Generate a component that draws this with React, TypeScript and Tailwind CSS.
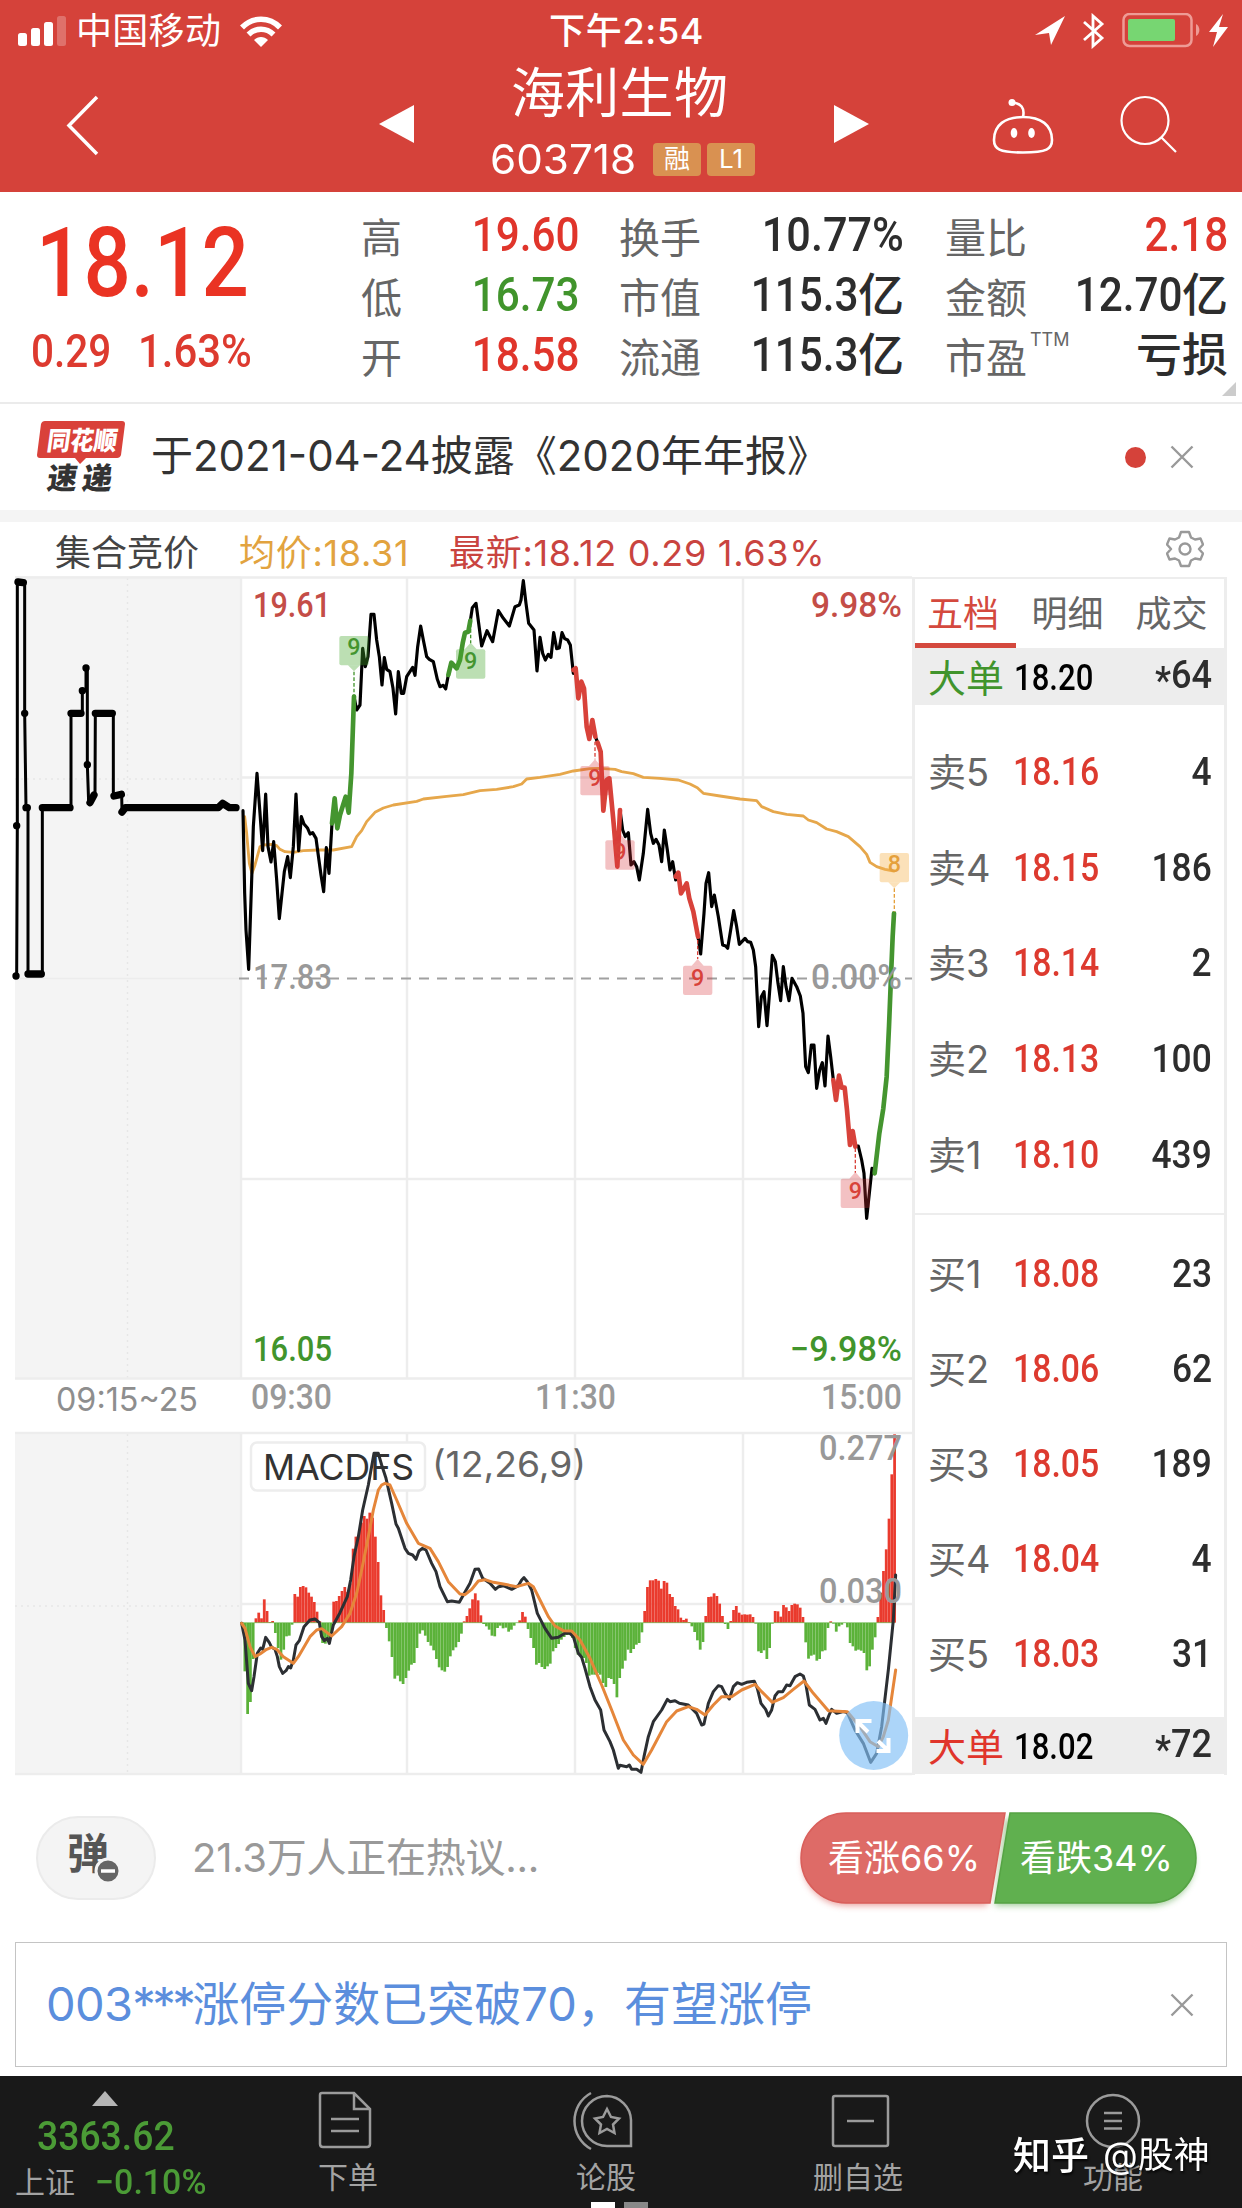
import type { ReactNode } from "react"
import clsx from "clsx"

const CJK = "font-['Inter','Noto_Sans_CJK_SC',sans-serif]"
const NUM = "font-['Roboto','Noto_Sans_CJK_SC',sans-serif] font-medium"

type Quote = {
  label: string
  value: string
  unit?: string
  color?: string
  sup?: string
}

type Level = {
  label: string
  price: string
  volume: string
}

const quoteColumns: Quote[][] = [
  [
    { label: "高", value: "19.60", color: "text-[#e0352b]" },
    { label: "低", value: "16.73", color: "text-[#41942c]" },
    { label: "开", value: "18.58", color: "text-[#e0352b]" },
  ],
  [
    { label: "换手", value: "10.77%" },
    { label: "市值", value: "115.3", unit: "亿" },
    { label: "流通", value: "115.3", unit: "亿" },
  ],
  [
    { label: "量比", value: "2.18", color: "text-[#e0352b]" },
    { label: "金额", value: "12.70", unit: "亿" },
    { label: "市盈", value: "", unit: "亏损", sup: "TTM" },
  ],
]

const quoteWidths = ["ml-[361px] w-[218px]", "ml-[40px] w-[285px]", "ml-[41px] w-[283px]"]

const sells: Level[] = [
  { label: "卖5", price: "18.16", volume: "4" },
  { label: "卖4", price: "18.15", volume: "186" },
  { label: "卖3", price: "18.14", volume: "2" },
  { label: "卖2", price: "18.13", volume: "100" },
  { label: "卖1", price: "18.10", volume: "439" },
]

const buys: Level[] = [
  { label: "买1", price: "18.08", volume: "23" },
  { label: "买2", price: "18.06", volume: "62" },
  { label: "买3", price: "18.05", volume: "189" },
  { label: "买4", price: "18.04", volume: "4" },
  { label: "买5", price: "18.03", volume: "31" },
]

// one value per minute, in thirds of a pixel
const macdBars = [
  2, -145, -273, -237, -108, 13, 30, 13, 70, 35, 2, 5, -30, -75, -110, -80, -40, -38, -5, 86,
  78, 107, 110, 106, 90, 78, 62, 33, 4, -60, -62, -55, -40, 63, 65, 80, 95, 107, 92, 118,
  222, 258, 262, 300, 320, 312, 330, 315, 258, 182, 82, 38, -15, -55, -102, -167, -158, -175, -183, -165,
  -143, -125, -120, -75, -32, -22, -38, -57, -68, -82, -108, -133, -142, -146, -132, -100, -82, -73, -57, -32,
  4, 20, 43, 70, 88, 67, 22, -3, -10, -20, -38, -40, -15, -8, -16, -14, -26, -20, -8, 0,
  7, 32, 18, -18, -45, -75, -125, -120, -132, -138, -130, -122, -85, -75, -63, -50, -42, -36, -35, -45,
  -75, -95, -100, -105, -120, -158, -155, -155, -150, -155, -180, -192, -165, -168, -183, -223, -165, -137, -113, -80,
  -90, -78, -65, -60, -28, 35, 107, 127, 127, 131, 126, 102, 125, 120, 86, 77, 50, 40, 15, 8,
  12, 2, -10, -27, -52, -80, -57, 20, 77, 78, 88, 80, 57, 20, -3, -18, 5, 38, 50, 30,
  24, 25, 24, 25, 17, -2, -85, -90, -82, -108, -75, -2, 35, 34, 18, 53, 46, 35, 53, 57,
  55, 45, 17, -58, -107, -98, -95, -113, -108, -85, -82, -15, 4, -2, -26, -10, -5, 0, -13, -60,
  -70, -83, -80, -83, -90, -142, -130, -80, -43, 17, 90, 155, 220, 312, 445, 565,
]

function Line({ points, color = "#000", width = 9.5 }: { points: string; color?: string; width?: number }) {
  return (
    <polyline
      points={points}
      fill="none"
      stroke={color}
      strokeWidth={width}
      strokeLinejoin="round"
      strokeLinecap="round"
    />
  )
}

function Marker({
  x,
  y,
  n = "9",
  down = false,
  fill,
  color,
  dash,
}: {
  x: number
  y: number
  n?: string
  down?: boolean
  fill: string
  color: string
  dash?: [number, number]
}) {
  return (
    <g>
      {dash && (
        <line x1={x} x2={x} y1={dash[0]} y2={dash[1]} stroke={color} strokeWidth="4" strokeDasharray="11 6" />
      )}
      <g fill={fill}>
        <rect x={x - 44} y={y} width="88" height="88" rx="6" />
        {down ? (
          <path d={`M${x - 18} ${y + 88}L${x} ${y + 106}L${x + 18} ${y + 88}Z`} />
        ) : (
          <path d={`M${x - 18} ${y}L${x} ${y - 20}L${x + 18} ${y}Z`} />
        )}
      </g>
      <text x={x} y={down ? y + 57 : y + 60} fontSize="70" textAnchor="middle" fill={color} className={NUM}>
        {n}
      </text>
    </g>
  )
}

function AxisText({
  x,
  y,
  w,
  fill,
  size = 35,
  children,
}: {
  x: number
  y: number
  w: number
  fill: string
  size?: number
  children: string
}) {
  return (
    <text
      x={x}
      y={y}
      textLength={w}
      lengthAdjust="spacingAndGlyphs"
      fontSize={size}
      fill={fill}
      className={NUM}
    >
      {children}
    </text>
  )
}

function Chart() {
  const red = "#d8423a"
  const green = "#44952f"
  const avg = "#e6a74b"
  const redFill = "rgba(214,50,55,0.3)"
  const greenFill = "rgba(70,165,45,0.36)"

  return (
    <svg width="912" height="1208" viewBox="0 576 912 1208" className="block shrink-0">
      <rect x="15" y="576" width="226" height="803" fill="#f4f4f4" />
      <rect x="15" y="1433" width="226" height="341" fill="#f4f4f4" />
      <g stroke="#e6e6e6" strokeWidth="1.5" strokeDasharray="2 4">
        <path d="M127.500 578V1379M15 779H240M127.500 1434V1774M15 1606H240" />
      </g>
      <g stroke="#ededed" strokeWidth="2.500" fill="none">
        <path d="M15 577.500H914M241 577V1379M407 577V1379M575 577V1379M743 577V1379" />
        <path d="M241 777.500H914M241 1179H914M15 1378.500H914" />
        <path d="M15 1433H914M241 1433V1774M407 1433V1774M575 1433V1774M743 1433V1774M241 1604H914M15 1774H914" />
      </g>
      <path d="M15 978.500H241" stroke="#ececec" strokeWidth="1.500" />
      <path d="M239 978.500H914" stroke="#a0a0a0" strokeWidth="1.800" strokeDasharray="10 8" />

      {/* call auction */}
      <g transform="translate(0 560) scale(0.33333)">
        <Line
          width={9}
          points="50,1248 52,800 52,66 74,68 74,460 78,743 84,743 84,1242 127,1242 127,743 213,743 213,460 247,460 247,392 258,392 258,324 262,324 262,614 266,728 285,705 286,460 340,460 340,708 365,703 366,756 376,743"
        />
        <path
          d="M54 66L70 68M84 1242H124M127 743H210M213 460H243M286 460H337M270 728L282 705M342 708L364 703M366 756L376 743H655L668 730L688 743H708M74 460h.1M78 743h4M258 324h.1M247 392h.1M262 614h.1M50 797h.1M48 1248h.1"
          stroke="#000"
          strokeWidth="22"
          strokeLinecap="round"
          strokeLinejoin="round"
          fill="none"
        />
      </g>

      {/* morning session */}
      <g transform="translate(240 560) scale(0.33333)">
        <Line
          color={avg}
          width={8.5}
          points="14,770 20,820 28,910 36,940 45,915 60,860 70,855 95,853 110,857 120,868 135,875 160,877 190,872 235,870 280,870 335,860 350,830 365,812 380,785 405,757 430,744 460,735 530,724 550,717 620,709 670,704 720,692 770,688 820,680 845,672 860,657 900,652 960,643 1000,633 1050,626 1080,625 1125,628 1145,635 1180,641 1210,652 1260,655 1315,660 1350,672 1372,683 1390,700 1440,708 1500,717 1550,722 1565,740 1600,755 1640,763 1690,768 1705,780 1730,788 1760,807 1790,815 1825,830 1860,860 1880,883 1890,907 1910,920 1935,928 1962,933"
        />
        <Line points="9,752 14,1000 18,1110 26,1228 36,930 40,800 51,640 60,760 68,872 77,702 84,860 93,906 101,845 110,960 118,1076 126,1000 133,935 143,890 151,953 160,860 168,702 176,872 184,770 192,792 203,805 210,822 218,818 228,835 234,880 243,945 251,995 259,863 267,940 276,790" />
        <Line points="342,410 350,450 360,435 368,265 376,320 384,290 393,163 402,163 410,240 418,290 426,375 433,293 440,328 450,335 459,385 467,462 475,335 484,400 491,400 500,350 518,322 525,346 533,260 542,198 550,240 560,290 568,298 580,305 592,358 600,380 610,376 617,387 625,345" />
        <Line points="691,182 697,143 708,130 716,190 725,258 741,212 758,245 775,152 790,175 808,198 825,140 838,135 843,120 850,62 858,130 866,190 882,210 891,333 900,232 908,280 916,300 925,283 933,292 941,218 950,266 958,264 966,218 974,236 983,240 991,255 1000,340" />
        <Line color={green} width={14} points="276,790 284,715 292,805 300,765 317,710 326,758 334,640 342,410" />
        <Line color={green} width={14} points="625,345 634,308 650,325 660,300 668,250 675,218 685,215 691,182" />
        <Marker x={342} y={228} down fill={greenFill} color={green} dash={[335, 405]} />
        <Marker x={692} y={268} fill={greenFill} color={green} dash={[190, 250]} />
      </g>

      {/* afternoon session */}
      <g transform="translate(560 560) scale(0.33333)">
        <Line points="106,530 113,548" />
        <Line points="180,750 188,810 196,830 205,818 213,915 222,905 230,920 238,960 250,880 263,748 272,820 280,850 288,838 297,855 305,905 313,810 322,870 330,930 338,905 347,960" />
        <Line points="414,1130 422,1182 432,1060 438,970 446,938 455,1040 463,1005 475,1070 488,1155 497,1158 503,1165 512,1110 521,1052 530,1100 538,1153 555,1135 563,1145 572,1147 580,1170 587,1220 596,1400 604,1310 612,1295 621,1397 630,1280 637,1186 646,1205 654,1270 662,1322 670,1220 678,1280 687,1322 696,1255 710,1280 721,1308 729,1360 737,1520 745,1538 754,1455 762,1455 770,1585 779,1530 787,1508 795,1578 804,1428 812,1490 820,1560" />
        <Line points="886,1758 895,1758 905,1800 912,1840 920,1975 928,1900 936,1825 944,1840" />
        <Line color={red} width={14} points="40,330 47,325 55,415 64,365 72,385 80,500 88,537 97,480 106,530" />
        <Line color={red} width={14} points="113,548 122,575 130,752 140,660 148,655 160,780 172,920 180,750" />
        <Line color={red} width={14} points="347,950 355,938 363,1000 380,970 388,1015 400,1055 414,1130" />
        <Line color={red} width={14} points="820,1560 828,1620 837,1547 845,1583 854,1583 861,1650 870,1755 878,1713 886,1760" />
        <Marker x={105} y={618} fill={redFill} color={red} dash={[545, 598]} />
        <Marker x={180} y={841} fill={redFill} color={red} />
        <Marker x={413} y={1217} fill={redFill} color={red} dash={[1140, 1197]} />
        <Marker x={886} y={1856} fill={redFill} color={red} dash={[1765, 1838]} />
        <Line color={green} width={14} points="944,1840 958,1720 970,1645 980,1550 987,1400 993,1250 998,1130 1002,1060" />
        <Marker x={1003} y={879} n="8" down fill="rgba(245,180,80,0.4)" color="#e5a03c" dash={[985, 1055]} />
      </g>

      <AxisText x={253} y={617} w={78} fill="#c44d47">19.61</AxisText>
      <AxisText x={811} y={617} w={91} fill="#c44d47">9.98%</AxisText>
      <AxisText x={253} y={989} w={79} fill="#999">17.83</AxisText>
      <AxisText x={811} y={989} w={91} fill="#999">0.00%</AxisText>
      <AxisText x={253} y={1361} w={79} fill="#41942c">16.05</AxisText>
      <AxisText x={790} y={1361} w={112} fill="#41942c">−9.98%</AxisText>
      <AxisText x={251} y={1409} w={81} fill="#999">09:30</AxisText>
      <AxisText x={535} y={1409} w={81} fill="#999">11:30</AxisText>
      <AxisText x={821} y={1409} w={81} fill="#999">15:00</AxisText>
      <text x="56" y="1411" textLength="142" lengthAdjust="spacingAndGlyphs" fontSize="33" fill="#8e8e8e" className={CJK}>
        09:15~25
      </text>

      {/* macd */}
      <rect x="251" y="1442.500" width="174" height="48" rx="6" fill="#fff" stroke="#ededed" strokeWidth="2.500" />
      <text x="263" y="1480" textLength="151" lengthAdjust="spacingAndGlyphs" fontSize="36" fill="#333" className={CJK}>
        MACDFS
      </text>
      <text x="432" y="1477" textLength="154" lengthAdjust="spacingAndGlyphs" fontSize="35" fill="#666" className={CJK}>
        (12,26,9)
      </text>
      <g transform="translate(230 1420) scale(0.33333)">
        {macdBars.map((v, i) => (
          <g key={i} fill={v >= 0 ? "#ea3a2d" : "#5bb239"}>
            <rect x={32 + i * 8.33} y={v >= 0 ? 608 - v : 609} width="8.33" height={Math.abs(v)} />
            <rect x={32 + i * 8.33} y={v >= 0 ? 608 - v : 609} width="1" height={Math.abs(v)} fill="rgba(255,255,255,0.15)" />
          </g>
        ))}
        <line x1="32" x2="1995" y1="608" y2="608" stroke="#5bb239" strokeWidth="2" />
        <Line
          width={9}
          color="#2c2f33"
          points="35,610 45,660 55,790 65,812 72,770 82,700 92,684 98,688 107,652 118,668 125,682 135,688 142,710 148,740 158,760 168,752 175,740 182,744 190,720 198,675 208,662 222,620 240,600 255,597 268,608 275,650 283,662 292,655 298,670 310,615 330,578 352,530 362,480 372,410 385,350 398,270 415,195 432,100 445,100 455,135 468,175 485,250 498,312 505,325 525,385 535,400 548,405 558,418 567,393 577,385 588,390 605,430 618,455 630,500 652,545 665,543 688,547 703,520 720,490 735,448 746,447 758,475 780,490 796,508 806,500 820,497 845,508 865,497 875,480 882,473 892,485 905,510 922,580 945,625 965,655 985,652 1005,640 1020,640 1030,650 1045,700 1055,712 1065,745 1080,800 1095,840 1112,870 1122,930 1140,965 1150,990 1165,1045 1170,1036 1190,1040 1198,1035 1205,1048 1220,1048 1233,1057 1242,1010 1255,950 1270,905 1295,870 1312,838 1320,845 1335,842 1348,850 1375,855 1400,880 1415,915 1422,912 1435,850 1450,815 1465,797 1475,800 1485,820 1498,837 1510,800 1522,788 1535,793 1550,787 1573,784 1582,805 1593,850 1607,868 1615,888 1625,870 1635,828 1645,815 1658,815 1670,795 1680,797 1695,770 1710,762 1720,768 1728,795 1738,855 1755,868 1770,900 1780,895 1788,910 1796,888 1805,868 1820,880 1840,875 1852,878 1875,930 1900,970 1922,1027 1940,1000 1955,920 1975,750 1990,600 1997,465"
        />
        <Line
          width={9}
          color="#e5863a"
          points="35,610 45,625 60,680 75,710 90,702 110,688 125,682 140,688 160,710 190,730 205,710 240,650 260,630 275,626 305,648 335,620 360,580 380,520 395,450 415,350 430,270 445,210 455,195 465,190 480,195 500,240 530,310 565,370 600,385 625,425 655,485 690,522 705,524 725,508 745,483 765,479 790,487 820,492 860,500 895,490 910,500 930,540 955,590 975,618 1000,632 1025,633 1050,660 1080,715 1115,795 1145,870 1180,960 1210,1005 1240,1033 1265,990 1310,905 1340,873 1375,860 1400,868 1425,885 1450,855 1475,830 1505,830 1535,810 1575,793 1595,815 1627,847 1660,833 1690,808 1722,783 1750,820 1795,872 1852,875 1890,920 1920,965 1945,980 1960,950 1975,900 1997,750"
        />
      </g>
      <AxisText x={819} y={1460} w={83} fill="#999">0.277</AxisText>
      <AxisText x={819} y={1603} w={83} fill="#999">0.030</AxisText>
      <circle cx="873.700" cy="1735.500" r="34.500" fill="rgba(129,192,246,0.66)" />
      <g stroke="#fff" strokeWidth="4" fill="none">
        <path d="M857.500 1733V1721H871.500M858 1722L868 1732M876.500 1751H888.500V1738M888 1750.500L878 1741" />
      </g>
    </svg>
  )
}

function StatusBar() {
  return (
    <div className="flex h-[62px] items-center pl-[18px] text-white">
      <svg width="48" height="30" viewBox="0 0 48 30" fill="#fff">
        <rect x="0" y="17" width="9" height="13" rx="2.500" />
        <rect x="13" y="12" width="9" height="18" rx="2.500" />
        <rect x="26" y="6" width="9" height="24" rx="2.500" />
        <rect x="39" y="0" width="9" height="30" rx="2.500" opacity="0.25" />
      </svg>
      <span className="ml-[10px] w-[144px] whitespace-nowrap text-[36px] leading-none tracking-[0.3px]">中国移动</span>
      <svg width="42" height="31" viewBox="0 0 42 31" className="ml-[20px]">
        <path d="M2 11.500C12.500 0.500 29.500 0.500 40 11.500" stroke="#fff" strokeWidth="5.500" fill="none" />
        <path d="M8.500 18.500C15.500 11.500 26.500 11.500 33.500 18.500" stroke="#fff" strokeWidth="5.500" fill="none" />
        <path d="M14 24C18 20 24 20 28 24L21 31Z" fill="#fff" />
      </svg>
      <span className="ml-[267px] w-[160px] whitespace-nowrap text-[36px] font-medium leading-none tracking-[0.7px]">下午2:54</span>
      <svg width="204" height="36" viewBox="1033 13 204 36" className="ml-[324px]">
        <path d="M1035 35L1065 16L1051 45L1049 33Z" fill="#fff" />
        <path d="M1084 22L1102 38L1093 46V16L1102 24L1084 40" stroke="#fff" strokeWidth="2.800" fill="none" />
        <rect x="1123.500" y="14" width="68" height="32" rx="6" stroke="#ee9b95" strokeWidth="2.500" fill="none" />
        <rect x="1128" y="19" width="47" height="22" rx="2" fill="#77d672" />
        <path d="M1196 24V36C1200.500 34 1200.500 26 1196 24Z" fill="#ee9b95" />
        <path d="M1223 14L1209 32H1217L1213 47L1228 27H1219Z" fill="#fff" />
      </svg>
    </div>
  )
}

function Badge({ children }: { children: ReactNode }) {
  return (
    <span className="flex h-[33px] w-[48px] items-center justify-center rounded-[4px] bg-[#d99151] text-[26px] leading-none">
      {children}
    </span>
  )
}

function Header() {
  return (
    <header className="h-[192px] bg-[#d5423a] text-white">
      <StatusBar />
      <div className="flex h-[130px]">
        <svg width="34" height="62" viewBox="0 0 34 62" className="ml-[65px] mt-[32px]">
          <path d="M32 3L4 31.500L32 60" stroke="#fff" strokeWidth="3.500" fill="none" />
        </svg>
        <svg width="35" height="38" viewBox="0 0 35 38" className="ml-[280px] mt-[43px]" fill="#fff">
          <path d="M35 0V38L0 19Z" />
        </svg>
        <div className="ml-[76px] w-[275px]">
          <h1 className="ml-[21px] mt-[5px] text-[54px] leading-[54px] tracking-[0.3px]">海利生物</h1>
          <div className="mt-[18px] flex items-center">
            <span className="w-[147px] origin-left scale-x-[1.03] whitespace-nowrap text-[41px] leading-[40px]">603718</span>
            <span className="ml-[16px] flex gap-[6px]">
              <Badge>融</Badge>
              <Badge>L1</Badge>
            </span>
          </div>
        </div>
        <svg width="35" height="38" viewBox="0 0 35 38" className="ml-[69px] mt-[43px]" fill="#fff">
          <path d="M0 0L35 19L0 38Z" />
        </svg>
        <svg width="62" height="58" viewBox="0 0 62 58" className="ml-[123px] mt-[35px]" stroke="#fff" strokeWidth="2.600" fill="none">
          <path d="M31 20C13 20 2 28 2 43C2 52 7 55.500 31 55.500S60 52 60 43C60 28 49 20 31 20Z" />
          <path d="M31 20C33 11 29 6 20 5.500" />
          <circle cx="20" cy="5.500" r="3.500" fill="#fff" stroke="none" />
          <ellipse cx="22" cy="36" rx="3.300" ry="5" fill="#fff" stroke="none" />
          <ellipse cx="39.500" cy="36" rx="3.300" ry="5" fill="#fff" stroke="none" />
        </svg>
        <svg width="60" height="60" viewBox="0 0 60 60" className="ml-[66px] mt-[33px]" stroke="#fff" strokeWidth="2.200" fill="none">
          <circle cx="25" cy="25.500" r="23.500" />
          <path d="M41 42L56 57" />
        </svg>
      </div>
    </header>
  )
}

function QuotePanel() {
  return (
    <section className="relative flex h-[212px] border-b-2 border-[#ebebeb]">
      <div className={clsx("absolute left-0 top-0 text-[#dd3a2f]", NUM)}>
        <div className="ml-[36px] mt-[23px] origin-left scale-x-[0.86] text-[97px] leading-[97px] text-[#ea3323]">18.12</div>
        <div className="mt-[16px] flex text-[46px] leading-[46px]">
          <span className="ml-[31px] w-[107px] origin-left scale-x-[0.88]">0.29</span>
          <span className="origin-left scale-x-[0.91]">1.63%</span>
        </div>
      </div>
      {quoteColumns.map((column, i) => (
        <div key={i} className={clsx("flex shrink-0 flex-col pt-[16px]", quoteWidths[i])}>
          {column.map((item) => (
            <div key={item.label} className="flex h-[60px] items-center justify-between">
              <span className="flex text-[41px] leading-none text-[#666]">
                {item.label}
                {item.sup && <sup className="top-0 -mt-[7px] ml-[3px] text-[18px] leading-none">{item.sup}</sup>}
              </span>
              <span
                className={clsx(
                  "-mt-[6px] flex items-center whitespace-nowrap text-[48px] leading-none",
                  NUM,
                  item.color ?? "text-[#2d2d2d]",
                )}
              >
                <span className={clsx("origin-right", item.value.endsWith("%") ? "scale-x-[0.9]" : "scale-x-[0.88]")}>
                  {item.value}
                </span>
                {item.unit && <span className="text-[46px]">{item.unit}</span>}
              </span>
            </div>
          ))}
        </div>
      ))}
      <svg width="14" height="14" className="absolute bottom-[6px] right-[6px]">
        <path d="M14 0V14H0Z" fill="#ccc" />
      </svg>
    </section>
  )
}

function CloseIcon() {
  return (
    <svg width="24" height="24" viewBox="0 0 24 24" stroke="#999" strokeWidth="2.400">
      <path d="M1.500 1.500L22.500 22.500M22.500 1.500L1.500 22.500" />
    </svg>
  )
}

function NoticeBar() {
  return (
    <section className="flex h-[118px] items-center border-b-[12px] border-[#f4f4f4]">
      <svg width="90" height="76" viewBox="36 418 90 76" className="ml-[36px] overflow-visible">
        <path d="M45 420H122Q125 420 125 423L121 454Q120 457 117 457H86L80 463L75 457H40Q37 457 37 454L41 423Q42 420 45 420Z" fill="#d9413a" />
        <g className="font-['Noto_Sans_CJK_SC',sans-serif] font-black" fontSize="26">
          <text transform="translate(46 448.500) skewX(-8)" textLength="70" lengthAdjust="spacingAndGlyphs" fill="#fff">
            同花顺
          </text>
          <text transform="translate(46 488) skewX(-8)" fontSize="30" textLength="65" lengthAdjust="spacing" fill="#333">
            速递
          </text>
        </g>
      </svg>
      <p className="-mt-[2px] ml-[25px] w-[950px] text-[42px] leading-none text-[#333]">于2021-04-24披露《2020年年报》</p>
      <span className="ml-[24px] h-[21px] w-[21px] rounded-full bg-[#d5423a]" />
      <span className="ml-[24px]">
        <CloseIcon />
      </span>
    </section>
  )
}

function Legend() {
  return (
    <div className="flex h-[54px] items-center pt-[7px] text-[36px] leading-none tracking-[0.7px]">
      <span className="ml-[55px] w-[184px] tracking-normal text-[#444]">集合竞价</span>
      <span className="w-[210px] text-[#e2a33f]">均价:18.31</span>
      <span className="w-[717px] whitespace-pre text-[#c9443f]">最新:18.12 0.29 1.63%</span>
      <svg width="38" height="38" viewBox="-19 -19 38 38" stroke="#999" strokeWidth="2.400" fill="none" strokeLinejoin="round" className="-mt-[8px]">
        <path d="M-4 -17H4L6 -11.500L10 -9.500L15.500 -10.500L18 -4.500L14 0L18 4.500L15.500 10.500L10 9.500L6 11.500L4 17H-4L-6 11.500L-10 9.500L-15.500 10.500L-18 4.500L-14 0L-18 -4.500L-15.500 -10.500L-10 -9.500L-6 -11.500Z" />
        <circle r="5.500" />
      </svg>
    </div>
  )
}

function BigOrder({ color, price, volume }: { color: string; price: string; volume: string }) {
  return (
    <div className="flex h-[57px] items-center bg-[#ededed] pl-[13px] pr-[12px] pt-[2px]">
      <span className={clsx("w-[86px] text-[38px] leading-none", color)}>大单</span>
      <span className={clsx("origin-left scale-x-[0.84] text-[37px] leading-none text-black", NUM)}>{price}</span>
      <span className={clsx("ml-auto flex origin-right scale-x-[0.95] text-[38px] leading-none text-[#2d2d2d]", NUM)}>
        <span className="mt-[6px]">*</span>
        {volume}
      </span>
    </div>
  )
}

function LevelRow({ label, price, volume }: Level) {
  return (
    <div className="flex items-center pl-[13px] pr-[12px] text-[38px] leading-none">
      <span className="w-[85px] text-[#666]">{label}</span>
      <span className={clsx("origin-left scale-x-[0.89] text-[#dd3a2f]", NUM)}>{price}</span>
      <span className={clsx("ml-auto origin-right scale-x-[0.93] text-[#2d2d2d]", NUM)}>{volume}</span>
    </div>
  )
}

function OrderBook() {
  return (
    <aside className="mt-px h-[1198px] w-[315px] border-x-[3px] border-t-2 border-[#ededed]">
      <div className="flex h-[69px] text-[36px] leading-none text-[#666]">
        <span className="flex w-[102px] items-center justify-center border-b-[5px] border-[#d4493e] pr-[5px] pt-[6px] text-[#d4493e]">五档</span>
        <span className="flex w-[104px] items-center justify-center">明细</span>
        <span className="flex w-[105px] shrink-0 items-center justify-center">成交</span>
      </div>
      <BigOrder color="text-[#41942c]" price="18.20" volume="64" />
      <div className="h-[510px] border-b-2 border-[#ededed] pt-[19px]">
        <div className="grid h-[479px] grid-rows-5">
          {sells.map((level) => (
            <LevelRow key={level.label} {...level} />
          ))}
        </div>
      </div>
      <div className="h-[502px] pt-[11px]">
        <div className="grid h-[475px] grid-rows-5">
          {buys.map((level) => (
            <LevelRow key={level.label} {...level} />
          ))}
        </div>
      </div>
      <BigOrder color="text-[#e0352b]" price="18.02" volume="72" />
    </aside>
  )
}

function Discussion() {
  return (
    <section className="flex h-[158px] items-center pb-[10px] pl-[36px]">
      <div className="flex h-[84px] w-[120px] items-center justify-center rounded-[42px] border-2 border-[#ebebeb] bg-[#f4f4f4]">
        <svg width="56" height="56" viewBox="0 0 56 56" className="overflow-visible">
          <text x="-1" y="39" fontSize="42" fill="#555" className="font-['Noto_Sans_CJK_SC',sans-serif] font-bold">
            弹
          </text>
          <circle cx="40" cy="41" r="12" fill="#666" stroke="#f4f4f4" strokeWidth="3" />
          <path d="M33 41H47" stroke="#fff" strokeWidth="3.500" />
        </svg>
      </div>
      <p className="ml-[36px] w-[609px] text-[40px] leading-none tracking-[-0.25px] text-[#999]">21.3万人正在热议...</p>
      <div className="relative h-[100px] w-[395px] pt-[5px]">
        <svg width="405" height="104" viewBox="-5 -2 405 104" className="absolute -left-[5px] top-[3px]">
          <defs>
            <filter id="soft" x="-10%" y="-10%" width="120%" height="130%">
              <feGaussianBlur stdDeviation="3" />
            </filter>
          </defs>
          <path d="M45 6H200L186 93H45A42 42 0 0 1 45 6Z" fill="#d9534f" opacity="0.5" filter="url(#soft)" />
          <path d="M204 6H350A42 42 0 0 1 350 93H194Z" fill="#4f9f40" opacity="0.5" filter="url(#soft)" />
          <path d="M45 0H204L189 90H45A45 45 0 0 1 45 0Z" fill="#de6b67" stroke="#d95f5b" strokeWidth="1.500" />
          <path d="M209 0H350A45 45 0 0 1 350 90H194Z" fill="#60b04f" stroke="#55a344" strokeWidth="1.500" />
        </svg>
        <div className="relative flex h-[90px] items-center text-[36px] leading-none text-white">
          <span className="ml-[27px] w-[192px]">看涨66%</span>
          <span>看跌34%</span>
        </div>
      </div>
    </section>
  )
}

function Alert() {
  return (
    <section className="mx-[15px] flex h-[125px] items-center border border-[#c4c4c4] pl-[30px]">
      <p className="-mt-[2px] w-[1124px] text-[47px] leading-none text-[#5b8edd]">
        <span className="tracking-[-0.700px]">003</span>
        <span className="tracking-[-3.500px]">***</span>涨停分数已突破70，有望涨停
      </p>
      <CloseIcon />
    </section>
  )
}

function TabItem({ label, className, children }: { label: string; className: string; children: ReactNode }) {
  return (
    <div className={clsx("flex flex-col items-center", className)}>
      <svg width="62" height="60" viewBox="0 0 62 60" stroke="#9b9b9b" strokeWidth="2.500" fill="none" className="mt-[15px] overflow-visible">
        {children}
      </svg>
      <span className="mt-[11px] whitespace-nowrap text-[30px] leading-[30px]">{label}</span>
    </div>
  )
}

function TabBar() {
  return (
    <nav className="relative mt-[9px] flex h-[132px] bg-[#191919] text-[#a3a3a3]">
      <div className="w-[210px]">
        <svg width="26" height="15" viewBox="0 0 26 15" className="ml-[92px] mt-[15px]">
          <path d="M13 0L26 15H0Z" fill="#b5b5b5" />
        </svg>
        <div className={clsx("ml-[37px] mt-[10px] origin-left scale-x-[0.91] text-[41px] leading-[41px] text-[#4b9b36]", NUM)}>3363.62</div>
        <div className="mt-[8px] flex text-[30px] leading-[35px]">
          <span className="ml-[15px] w-[82px]">上证</span>
          <span className={clsx("origin-left scale-x-[0.97] text-[35px] text-[#4b9b36]", NUM)}>−0.10%</span>
        </div>
      </div>
      <TabItem label="下单" className="ml-[88px] w-[100px]">
        <path
          transform="translate(-3 0)"
          d="M8 2H40L56 18V53Q56 56 53 56H9Q6 56 6 53V4Q6 2 8 2ZM40 2V18H56M17 28H45M17 40H45"
        />
      </TabItem>
      <TabItem label="论股" className="ml-[158px] w-[100px]">
        <g transform="translate(-4 0)">
          <path d="M20 2C-2 14 -2 46 20 58M36 5A25 25 0 0 0 36 55H60V29A25 25 0 0 0 36 5Z" />
          <path d="M36 18L40 26L48 27.500L42 33.500L43.500 42L36 38L28.500 42L30 33.500L24 27.500L32 26Z" />
        </g>
      </TabItem>
      <TabItem label="删自选" className="ml-[152px] w-[100px]">
        <rect x="6" y="5" width="55" height="50" rx="2" />
        <path d="M20 30H47" />
      </TabItem>
      <TabItem label="功能" className="ml-[155px] w-[100px]">
        <circle cx="31" cy="30" r="26" />
        <path d="M22 22H40M22 30H40M22 37.500H40" />
      </TabItem>
      <div className="absolute left-[1013px] top-[60px] flex gap-[14px] whitespace-nowrap text-[38px] leading-none text-white drop-shadow-[1px_2px_1px_rgba(0,0,0,0.8)]">
        <span className="font-medium">知乎</span>
        <span className="mt-px text-[36px]">@股神</span>
      </div>
      <div className="absolute bottom-0 left-[591px] flex gap-[9px]">
        <span className="h-[6px] w-[24px] bg-white" />
        <span className="h-[6px] w-[24px] bg-[#888]" />
      </div>
    </nav>
  )
}

export default function App() {
  return (
    <main className={clsx("h-[2208px] w-[1242px] overflow-hidden bg-white", CJK)}>
      <Header />
      <QuotePanel />
      <NoticeBar />
      <Legend />
      <div className="flex h-[1208px]">
        <Chart />
        <OrderBook />
      </div>
      <Discussion />
      <Alert />
      <TabBar />
    </main>
  )
}
